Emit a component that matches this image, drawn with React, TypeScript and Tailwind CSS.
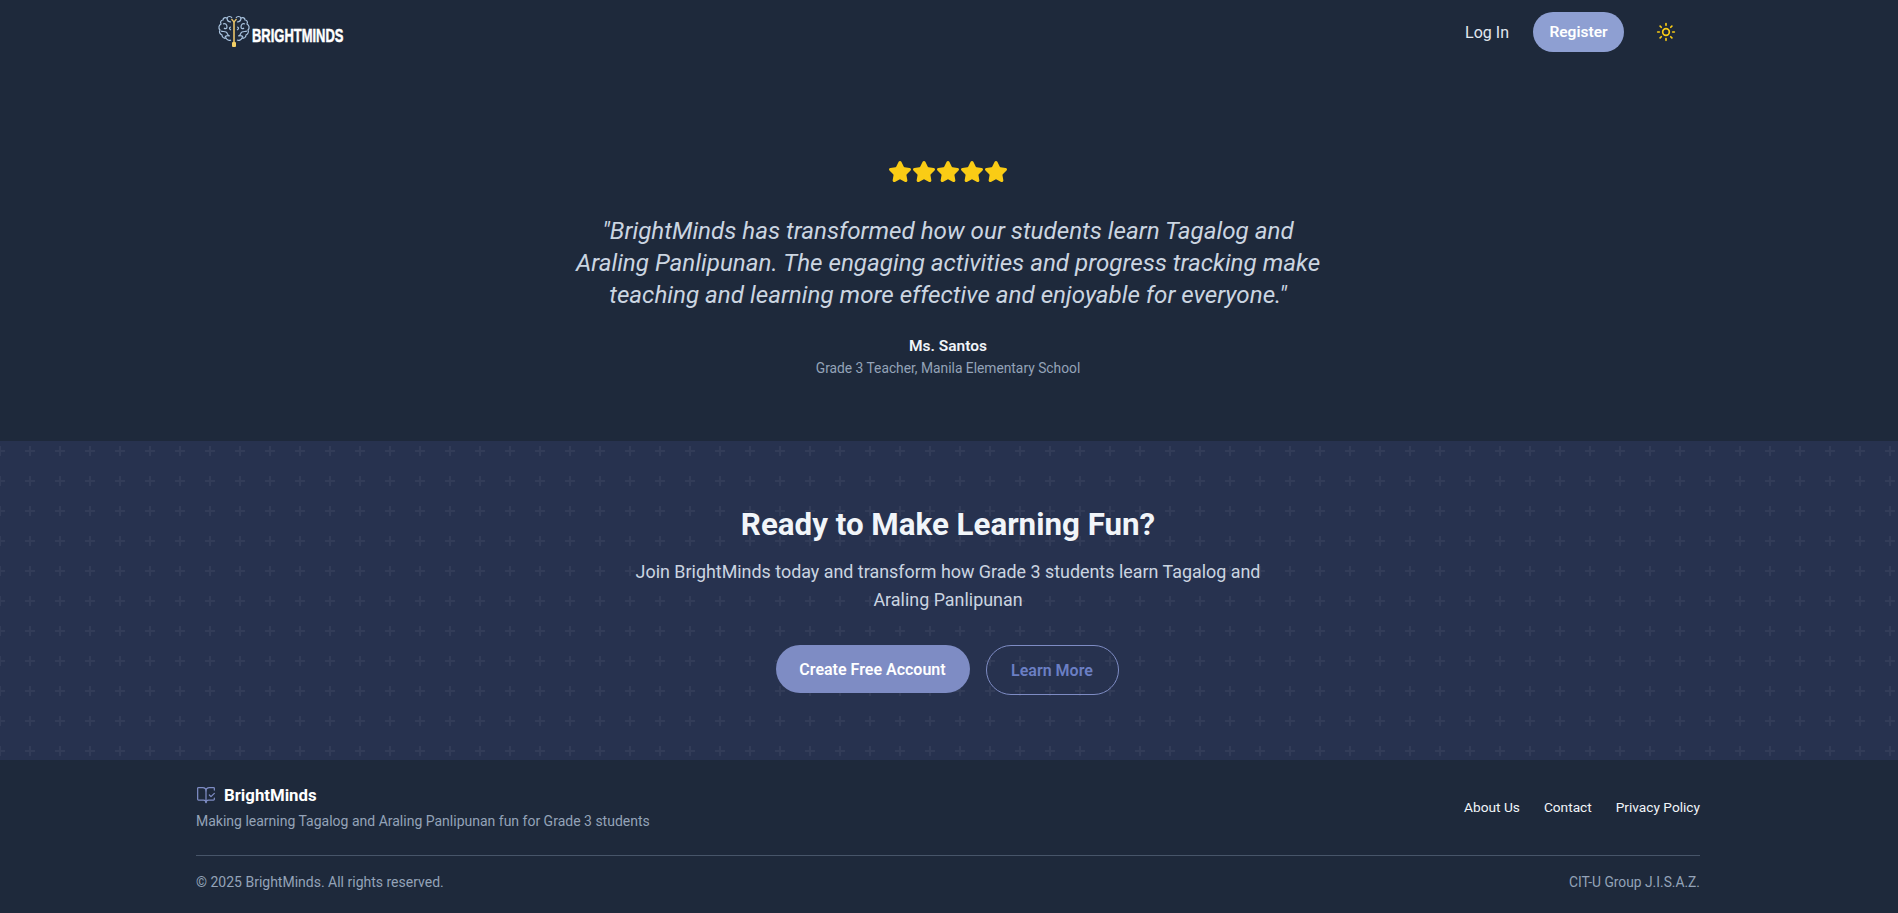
import { BookOpenCheck, Star, Sun } from "lucide-react";

function Brain() {
  return (
    <svg width="34" height="36" viewBox="0 0 34 36" fill="none" stroke="#a9c3df" strokeWidth="1.2" className="shrink-0">
      <path d="M15 4c-1-2-4-2-5 0-2-1-4 0-4 2-2 0-3 2-2 4-2 1-3 4-1 6-1 2 0 4 2 5 0 2 2 4 4 3 1 2 3 3 5 2" />
      <path d="M19 4c1-2 4-2 5 0 2-1 4 0 4 2 2 0 3 2 2 4 2 1 3 4 1 6 1 2 0 4-2 5 0 2-2 4-4 3-1 2-3 3-5 2" />
      <path d="M6 10c2-1 4 0 4 3 0 2-2 2-3 1M4 17c2 1 3 0 5 1s1 4 4 4M8 24c0-2 2-3 4-2M10 4c0 2 1 4 4 4M14 13c-2 0-2 2 0 3M28 10c-2-1-4 0-4 3 0 2 2 2 3 1M30 17c-2 1-3 0-5 1s-1 4-4 4M26 24c0-2-2-3-4-2M24 4c0 2-1 4-4 4M20 13c2 0 2 2 0 3" />
      <path d="M17 7v21" stroke="#e9c46a" strokeWidth="1.6" />
      <path d="M14.5 5l2.5 3 2.5-3" stroke="#e9c46a" />
      <rect x="15" y="28" width="4" height="5" rx="1" fill="#f2cf66" stroke="none" />
    </svg>
  );
}

export default function App() {
  return (
    <div className="min-h-[913px] bg-[#1e293b] text-white font-['Roboto','Noto_Sans',sans-serif]">
      <header className="ml-[196px] flex h-[64px] w-[1504px] items-center justify-between">
        <div className="ml-[21px] flex items-center">
          <Brain />
          <span className="ml-[1px] mt-[8px] inline-block w-[94px] origin-left scale-x-[0.72] whitespace-nowrap font-['Liberation_Sans',sans-serif] text-[18px] font-bold leading-none [-webkit-text-stroke:0.5px_white]">BRIGHTMINDS</span>
        </div>
        <div className="mr-[24px] flex items-center">
          <span className="pt-[2px] text-[16px] text-[#e2e8f0]">Log In</span>
          <span className="ml-[24px] flex h-[40px] w-[91px] items-center justify-center rounded-full bg-[#8e9fd2] pt-[2px] text-[15.5px] font-semibold text-white">Register</span>
          <Sun className="ml-[32px] text-[#facc15]" size={20} strokeWidth={2} />
        </div>
      </header>

      <section className="flex h-[377px] flex-col items-center pr-[2px] pt-[96px]">
        <div className="flex">
          {[0, 1, 2, 3, 4].map((i) => (
            <Star key={i} size={24} className="text-[#facc15]" fill="#facc15" />
          ))}
        </div>
        <p className="mt-[31px] w-[756px] text-center text-[24.2px] italic leading-[32px] text-[#cbd5e1]">
          "BrightMinds has transformed how our students learn Tagalog and Araling Panlipunan. The engaging activities and progress tracking make teaching and learning more effective and enjoyable for everyone."
        </p>
        <p className="mt-[25px] text-[15.5px] font-semibold leading-[20px] text-[#f1f5f9]">Ms. Santos</p>
        <p className="mt-[2px] text-[13.8px] leading-[20px] text-[#94a3b8]">Grade 3 Teacher, Manila Elementary School</p>
      </section>

      <section className="flex h-[319px] flex-col items-center bg-[#27324f] bg-[url('data:image/svg+xml,%3Csvg%20width=%2730%27%20height=%2730%27%20xmlns=%27http://www.w3.org/2000/svg%27%3E%3Cpath%20d=%27M14%205h2v4h4v2h-4v4h-2v-4h-4V9h4z%27%20fill=%27%23ffffff%27%20fill-opacity=%270.05%27/%3E%3C/svg%3E')] bg-[position:15px_0] pr-[2px] pt-[66px]">
        <h2 className="text-[31.3px] font-bold leading-[36px] text-[#f1f5f9]">Ready to Make Learning Fun?</h2>
        <p className="mt-[15px] w-[672px] text-center text-[17.9px] leading-[28px] text-[#cbd5e1]">
          Join BrightMinds today and transform how Grade 3 students learn Tagalog and Araling Panlipunan
        </p>
        <div className="mt-[31px] flex items-start gap-[16px] pr-[2px]">
          <span className="flex h-[48px] w-[194px] items-center justify-center rounded-full bg-[#7e8cc4] pt-[2px] text-[16px] font-semibold text-white">Create Free Account</span>
          <span className="flex h-[50px] w-[133px] items-center justify-center rounded-full border border-[#7e8cc4] pt-[2px] text-[16px] font-semibold text-[#6b7fc4]">Learn More</span>
        </div>
      </section>

      <footer className="ml-[196px] h-[153px] w-[1504px]">
        <div className="flex h-[96px] items-center justify-between border-b border-[#475569]">
          <div className="pb-[1px]">
            <div className="flex items-center gap-[8px]">
              <BookOpenCheck size={20} className="text-[#7e8cc4]" strokeWidth={1.5} />
              <span className="text-[16.8px] font-bold leading-[24px]">BrightMinds</span>
            </div>
            <p className="mt-[4px] text-[14px] leading-[20px] text-[#94a3b8]">Making learning Tagalog and Araling Panlipunan fun for Grade 3 students</p>
          </div>
          <div className="flex gap-[24px] text-[13.7px] text-[#f1f5f9]">
            <span>About Us</span>
            <span>Contact</span>
            <span>Privacy Policy</span>
          </div>
        </div>
        <div className="mt-[16px] flex justify-between text-[14px] leading-[20px] text-[#94a3b8]">
          <span>© 2025 BrightMinds. All rights reserved.</span>
          <span className="text-[13.8px]">CIT-U Group J.I.S.A.Z.</span>
        </div>
      </footer>
    </div>
  );
}
